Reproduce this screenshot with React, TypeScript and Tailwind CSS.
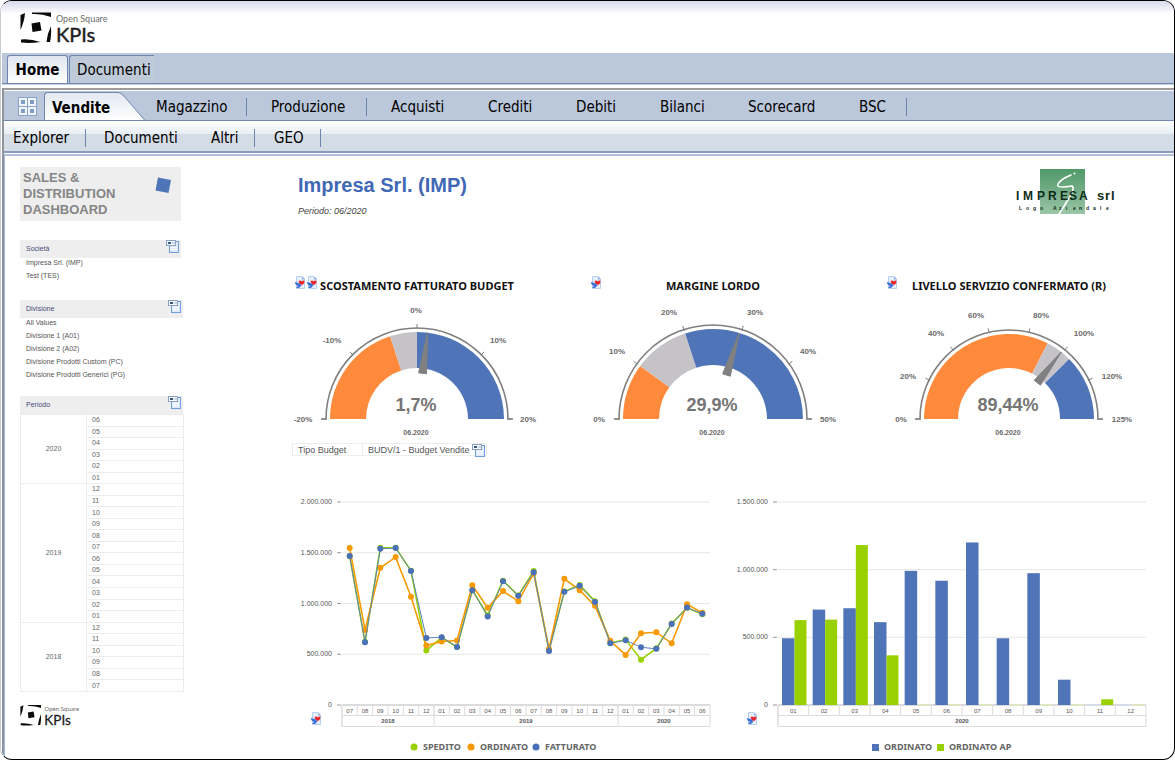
import React, { useState } from 'react';

interface NavItem {
  label: string;
  className: string;
}

interface GaugeData {
  title: string;
  value: string;
  radius: number;
  inner: number;
  needle: number;
  bands: { to: number; color: string }[];
  ticks: number[];
  labels: { text: string; x: number; y: number }[];
  icons: number;
}

interface FilterData {
  title: string;
  className: string;
  values: string[];
}

const ORANGE = '#ff8a3c';
const GREY = '#c5c3c7';
const BLUE = '#4f74b8';
const LIME = '#99d100';
const AMBER = '#f79a00';

const menu: NavItem[] = [
  { label: 'Magazzino', className: 'w-[91px] mr-6 border-r' },
  { label: 'Produzione', className: 'w-[96px] mr-6 border-r' },
  { label: 'Acquisti', className: 'w-[97px]' },
  { label: 'Crediti', className: 'w-[88px]' },
  { label: 'Debiti', className: 'w-[84px]' },
  { label: 'Bilanci', className: 'w-[88px]' },
  { label: 'Scorecard', className: 'w-[111px]' },
  { label: 'BSC', className: 'w-12 border-r' },
];

const subMenu: NavItem[] = [
  { label: 'Explorer', className: 'w-[73px] mr-[18px] border-r' },
  { label: 'Documenti', className: 'w-[107px]' },
  { label: 'Altri', className: 'w-11 mr-[19px] border-r' },
  { label: 'GEO', className: 'w-[47px] border-r' },
];

const filters: FilterData[] = [
  { title: 'Società', className: 'w-[161px] mt-[19px]', values: ['Impresa Srl. (IMP)', 'Test (TES)'] },
  {
    title: 'Divisione',
    className: 'w-[163px] mt-4',
    values: [
      'All Values',
      'Divisione 1 (A01)',
      'Divisione 2 (A02)',
      'Divisione Prodotti Custom (PC)',
      'Divisione Prodotti Generici (PG)',
    ],
  },
];

const periods = [
  { year: '2020', months: ['06', '05', '04', '03', '02', '01'] },
  { year: '2019', months: ['12', '11', '10', '09', '08', '07', '06', '05', '04', '03', '02', '01'] },
  { year: '2018', months: ['12', '11', '10', '09', '08', '07'] },
];

// Angles are in degrees, 0 on the left end of the dial and 180 on the right end
const gauges: GaugeData[] = [
  {
    title: 'SCOSTAMENTO FATTURATO BUDGET',
    value: '1,7%',
    radius: 87,
    inner: 51,
    needle: 97,
    bands: [{ to: 72, color: ORANGE }, { to: 90, color: GREY }, { to: 180, color: BLUE }],
    ticks: [0, 45, 90, 135, 180],
    labels: [
      { text: '-20%', x: 11, y: 119 },
      { text: '-10%', x: 40, y: 40 },
      { text: '0%', x: 124, y: 10 },
      { text: '10%', x: 206, y: 40 },
      { text: '20%', x: 236, y: 119 },
    ],
    icons: 2,
  },
  {
    title: 'MARGINE LORDO',
    value: '29,9%',
    radius: 90,
    inner: 54,
    needle: 107,
    bands: [{ to: 36, color: ORANGE }, { to: 72, color: GREY }, { to: 180, color: BLUE }],
    ticks: [0, 36, 72, 108, 144, 180],
    labels: [
      { text: '0%', x: 11, y: 119 },
      { text: '10%', x: 29, y: 51 },
      { text: '20%', x: 81, y: 12 },
      { text: '30%', x: 167, y: 12 },
      { text: '40%', x: 220, y: 51 },
      { text: '50%', x: 240, y: 119 },
    ],
    icons: 1,
  },
  {
    title: 'LIVELLO SERVIZIO CONFERMATO (R)',
    value: '89,44%',
    radius: 85,
    inner: 51,
    needle: 128,
    bands: [{ to: 117, color: ORANGE }, { to: 135, color: GREY }, { to: 180, color: BLUE }],
    ticks: [0, 26, 51, 77, 103, 129, 154, 180],
    labels: [
      { text: '0%', x: 17, y: 119 },
      { text: '20%', x: 24, y: 76 },
      { text: '40%', x: 52, y: 33 },
      { text: '60%', x: 92, y: 15 },
      { text: '80%', x: 157, y: 15 },
      { text: '100%', x: 200, y: 33 },
      { text: '120%', x: 228, y: 76 },
      { text: '125%', x: 238, y: 119 },
    ],
    icons: 1,
  },
];

// Values in thousands
const ordinato = [1546, 740, 1352, 1457, 1066, 585, 625, 635, 1181, 957, 1122, 1023, 1296, 552, 1243, 1131, 977, 632, 493, 707, 717, 608, 993, 908];
const fatturato = [1467, 618, 1540, 1546, 1319, 661, 668, 572, 1131, 872, 1220, 1076, 1309, 533, 1115, 1174, 1016, 608, 638, 569, 553, 799, 960, 898];
const spedito = [1467, 622, 1550, 1550, 1322, 536, 664, 572, 1131, 885, 1224, 1080, 1320, 537, 1118, 1182, 1022, 610, 645, 447, 558, 802, 957, 895];
const lineMonths = ['07', '08', '09', '10', '11', '12', '01', '02', '03', '04', '05', '06', '07', '08', '09', '10', '11', '12', '01', '02', '03', '04', '05', '06'];

const barOrdinato = [493, 705, 715, 612, 991, 918, 1201, 493, 974, 187, 0, 0];
const barOrdinatoAp = [627, 631, 1182, 367, 0, 0, 0, 0, 0, 0, 42, 0];
const barMonths = ['01', '02', '03', '04', '05', '06', '07', '08', '09', '10', '11', '12'];

const polar = (cx: number, cy: number, r: number, deg: number) => {
  const a = (deg * Math.PI) / 180;
  return [cx - r * Math.cos(a), cy - r * Math.sin(a)];
};

const band = (cx: number, cy: number, r: number, inner: number, from: number, to: number) => {
  const [x1, y1] = polar(cx, cy, r, from);
  const [x2, y2] = polar(cx, cy, r, to);
  const [x3, y3] = polar(cx, cy, inner, to);
  const [x4, y4] = polar(cx, cy, inner, from);
  return `M${x1} ${y1}A${r} ${r} 0 0 1 ${x2} ${y2}L${x3} ${y3}A${inner} ${inner} 0 0 0 ${x4} ${y4}Z`;
};

const KpiLogo: React.FC<{ className: string }> = ({ className }) => (
  <svg className={className} viewBox="0 0 96 34" role="img" aria-label="Open Square KPIs">
    <g fill="#0b0b0b">
      <path d="M.5 4 5 2Q4.500 10 .5 19Z" />
      <path d="M12 1.500H31V6Q22 2.500 12 3Z" />
      <path d="M11.500 12.500 20 11 21.500 19.500 12.500 21Z" />
      <path d="M31 15Q27.500 22 26.500 31H30Q31.500 25 31 15Z" />
      <path d="M1 28.500Q10 27.500 20.500 31 10 32.500 1 31.500Z" />
    </g>
    <text x="36" y="11" fontSize="9" fill="#6b6b6b" fontFamily="Lato, sans-serif">Open Square</text>
    <text x="36" y="31" fontSize="20" fill="#1c1c1c" stroke="#1c1c1c" strokeWidth=".4" fontFamily="Lato, sans-serif">KPIs</text>
  </svg>
);

const ImpresaLogo = () => (
  <svg className="w-[102px] h-[52px] mr-[37px]" viewBox="0 0 102 52" role="img" aria-label="Impresa srl">
    <defs>
      <linearGradient id="impresa" x1="0" y1="0" x2="0" y2="1">
        <stop offset="0" stopColor="#4f9a68" />
        <stop offset="0.6" stopColor="#7db18d" />
        <stop offset="1" stopColor="#9ac7a6" />
      </linearGradient>
    </defs>
    <rect x="25" y="4" width="45" height="45" fill="url(#impresa)" />
    <path d="M56 10Q42 16 43 21 44 23 57 21 61 23 51 38 47 45 44 49" fill="none" stroke="#fff" strokeWidth="1.600" strokeLinecap="round" />
    <circle cx="59.500" cy="8.500" r="1" fill="#fff" />
    <g fill="#0d2b18" fontWeight="bold" fontFamily="'Liberation Sans Narrow', 'Liberation Sans', sans-serif">
      <text x="1 8 22 33 45 54 64" y="35" fontSize="12">IMPRESA</text>
      <text x="82 90 96" y="35" fontSize="13">srl</text>
      <text x="4 11 18 25 32 38 44 51 58 64 71 78 85 91" y="45" fontSize="5">Logo Aziendale</text>
    </g>
  </svg>
);

const ExportIcon = () => (
  <svg className="w-3 h-[13px] shrink-0" viewBox="0 0 12 13" aria-hidden="true">
    <path d="M2.500 .5H8L10.500 3V12.500H2.500Z" fill="#e6effb" stroke="#b9cfee" />
    <path d="M8 .5V3.500H11Z" fill="#8fb2e3" />
    <path d="M4.500 5Q7 4 7.500 5.500 9 4 10.500 5 10.500 8 7.500 9 5 8 4.500 5Z" fill="#e8252b" />
    <path d="M.5 6 5 7 7.500 9.500 5 12 2 12 4 10 2 9Z" fill="#3f74d6" />
  </svg>
);

const ListIcon = () => (
  <svg className="w-[13px] h-[13px] shrink-0" viewBox="0 0 13 13" aria-hidden="true">
    <rect x="3.500" y="1.500" width="9" height="11" fill="#dfeafa" stroke="#6f9fdd" />
    <path d="M5 9.500H11M5 7.500H11" stroke="#fff" />
    <rect x=".5" y=".5" width="9" height="5" fill="#f7faff" stroke="#8aa3c2" />
    <path d="M2 2H5V4H2Z" fill="#38587f" />
    <path d="M6 3H9" stroke="#9ab1cf" />
  </svg>
);

const Gauge: React.FC<{ gauge: GaugeData }> = ({ gauge }) => {
  const cx = 125;
  const cy = 119;
  const ring = gauge.radius + 4;
  const tip = polar(cx, cy, gauge.radius, gauge.needle);
  const base = polar(cx, cy, 46, gauge.needle);
  const a = ((gauge.needle + 90) * Math.PI) / 180;
  // The dial's x axis is mirrored, so the perpendicular is too
  const dx = -4 * Math.cos(a);
  const dy = -4 * Math.sin(a);

  return (
    <svg className="w-full h-auto mt-[5px] block" viewBox="0 0 270 140" role="img" aria-label={gauge.title}>
      <path
        d={`M${cx - ring - 5} ${cy}H${cx - ring}A${ring} ${ring} 0 0 1 ${cx + ring} ${cy}H${cx + ring + 5}`}
        fill="none"
        stroke="#808080"
        strokeWidth="1.600"
      />
      {gauge.ticks.map((t) => {
        const [x1, y1] = polar(cx, cy, ring - 1, t);
        const [x2, y2] = polar(cx, cy, ring + 4, t);
        return <line key={t} x1={x1} y1={y1} x2={x2} y2={y2} stroke="#808080" />;
      })}
      {gauge.bands.map((b, i) => (
        <path key={i} fill={b.color} d={band(cx, cy, gauge.radius, gauge.inner, i === 0 ? 0 : gauge.bands[i - 1].to, b.to)} />
      ))}
      <path d={`M${tip[0]} ${tip[1]}L${base[0] + dx} ${base[1] + dy}L${base[0] - dx} ${base[1] - dy}Z`} fill="#808080" stroke="#808080" />
      <g textAnchor="middle" fontFamily="'Liberation Sans', Arial, sans-serif" fill="#6a6a6a">
        {gauge.labels.map((l) => (
          <text key={l.text} x={l.x} y={l.y + 3} fontSize="8" fontWeight="bold">{l.text}</text>
        ))}
        <text x="124" y="111" fontSize="18" fontWeight="bold" fill="#757575">{gauge.value}</text>
        <text x="124" y="135" fontSize="7" fontWeight="bold">06.2020</text>
      </g>
    </svg>
  );
};

interface AxisProps {
  left: number;
  months: string[];
  years: { label: string; count: number }[];
  scale: string[];
}

// Grid lines plus the two-row month / year axis, shared by both charts
const Axis: React.FC<AxisProps> = ({ left, months, years, scale }) => {
  const width = 368;
  const step = width / months.length;
  let used = 0;

  return (
    <g fontFamily="'Liberation Sans', Arial, sans-serif" fontSize="7" fill="#555">
      {scale.map((label, i) => {
        const y = 12 + (203 * i) / (scale.length - 1);
        return (
          <g key={label}>
            <line x1={left} x2={left + width} y1={y} y2={y} stroke={i === scale.length - 1 ? '#b8b8b8' : '#e6e6e6'} />
            <line x1={left - 5} x2={left - 1} y1={y} y2={y} stroke="#999" />
            <text x={left - 10} y={y + 2} textAnchor="end">{label}</text>
          </g>
        );
      })}
      <path d={`M${left} 215V236.500H${left + width}V215M${left} 225.500H${left + width}`} fill="none" stroke="#dcdcdc" />
      {months.map((m, i) => (
        <g key={i}>
          {i > 0 && <line x1={left + step * i} x2={left + step * i} y1="215" y2="225" stroke="#dcdcdc" />}
          <text x={left + step * (i + 0.5)} y="223" textAnchor="middle" fontSize="6">{m}</text>
        </g>
      ))}
      {years.map((y) => {
        const x = left + step * used;
        used += y.count;
        return (
          <g key={y.label}>
            <line x1={x} x2={x} y1="215" y2="236" stroke="#dcdcdc" />
            <text x={x + (step * y.count) / 2} y="233" textAnchor="middle" fontSize="6" fontWeight="bold">{y.label}</text>
          </g>
        );
      })}
    </g>
  );
};

const LineChart = () => {
  const left = 50;
  const step = 368 / 24;
  const px = (i: number) => left + step * (i + 0.5);
  const py = (v: number) => 215 - (v / 2000) * 203;
  const series = [
    { name: 'SPEDITO', color: LIME, data: spedito, x: 122, line: LIME },
    { name: 'ORDINATO', color: AMBER, data: ordinato, x: 179, line: AMBER },
    { name: 'FATTURATO', color: '#4a70b9', data: fatturato, x: 244, line: '#5b83bb' },
  ];

  return (
    <svg className="w-full h-auto block" viewBox="0 0 428 265" role="img" aria-label="Spedito, ordinato e fatturato">
      <Axis
        left={left}
        months={lineMonths}
        years={[{ label: '2018', count: 6 }, { label: '2019', count: 12 }, { label: '2020', count: 6 }]}
        scale={['2.000.000', '1.500.000', '1.000.000', '500.000', '0']}
      />
      {series.map((s) => (
        <g key={s.name}>
          <polyline
            points={s.data.map((v, i) => `${px(i)},${py(v)}`).join(' ')}
            fill="none"
            stroke={s.line}
            strokeWidth={s.name === 'FATTURATO' ? 1 : 1.6}
          />
          {s.data.map((v, i) => (
            <circle key={i} cx={px(i)} cy={py(v)} r="3" fill={s.color} />
          ))}
        </g>
      ))}
      <g fontFamily="'Noto Sans', sans-serif" fontSize="9" fontWeight="bold" fill="#666">
        {series.map((s) => (
          <g key={s.name}>
            <circle cx={s.x} cy="257" r="3.500" fill={s.color} />
            <text x={s.x + 9} y="260">{s.name}</text>
          </g>
        ))}
      </g>
    </svg>
  );
};

const BarChart = () => {
  const left = 52;
  const step = 368 / 12;
  const h = (v: number) => (v / 1500) * 203;

  return (
    <svg className="w-full h-auto block" viewBox="0 0 428 265" role="img" aria-label="Ordinato e ordinato anno precedente">
      <Axis
        left={left}
        months={barMonths}
        years={[{ label: '2020', count: 12 }]}
        scale={['1.500.000', '1.000.000', '500.000', '0']}
      />
      {barMonths.map((m, i) => {
        const x = left + step * i + 4;
        return (
          <g key={m}>
            {barOrdinato[i] > 0 ? (
              <rect x={x} y={215 - h(barOrdinato[i])} width="12.500" height={h(barOrdinato[i])} fill={BLUE} />
            ) : (
              <line x1={x} x2={x + 12} y1="215" y2="215" stroke="#cfdcf5" />
            )}
            {barOrdinatoAp[i] > 0 ? (
              <rect x={x + 12.5} y={215 - h(barOrdinatoAp[i])} width="12" height={h(barOrdinatoAp[i])} fill={LIME} />
            ) : (
              <line x1={x + 13} x2={x + 25} y1="215" y2="215" stroke="#e0f2a8" />
            )}
          </g>
        );
      })}
      <g fontFamily="'Noto Sans', sans-serif" fontSize="9" fontWeight="bold" fill="#666">
        <rect x="146" y="254" width="7" height="7" fill={BLUE} />
        <text x="158" y="260">ORDINATO</text>
        <rect x="211" y="254" width="7" height="7" fill={LIME} />
        <text x="223" y="260">ORDINATO AP</text>
      </g>
    </svg>
  );
};

const FilterHeader: React.FC<{ title: string }> = ({ title }) => (
  <div className="flex items-start justify-between h-[18px] bg-[#eeeeee] pl-[6px] pr-[2px]">
    <h2 className="text-[7px] leading-[17px] text-[#4a4a7c]">{title}</h2>
    <button type="button" aria-label={`Seleziona ${title}`} className="cursor-pointer">
      <ListIcon />
    </button>
  </div>
);

const Sidebar = () => (
  <aside className="w-[164px] shrink-0 pt-[11px]">
    <div className="flex justify-between w-[161px] h-[54px] bg-[#eeeeee] pl-[3px] pt-[3px] pr-2">
      <h1 className="text-[13px] leading-4 font-bold text-[#858585]">
        SALES &amp;
        <br />
        DISTRIBUTION
        <br />
        DASHBOARD
      </h1>
      <svg className="w-[18px] h-[18px] mt-[6px]" viewBox="0 0 18 18" aria-hidden="true">
        <path d="M3 1.500 16 4 13.500 17 .5 14.500Z" fill={BLUE} />
      </svg>
    </div>
    {filters.map((f) => (
      <section key={f.title} className={f.className}>
        <FilterHeader title={f.title} />
        <ul className="pl-[6px]">
          {f.values.map((v) => (
            <li key={v} className="h-[13px] text-[7px] leading-[10px] text-[#555] whitespace-nowrap">{v}</li>
          ))}
        </ul>
      </section>
    ))}
    <div className="mt-[13px] w-[163px]">
      <FilterHeader title="Periodo" />
    </div>
    <table className="w-full h-[278px] border-collapse text-[7px] leading-[8px] text-[#666]">
      <tbody>
        {periods.map((p) =>
          p.months.map((m, i) => (
            <tr key={p.year + m}>
              {i === 0 && (
                <th rowSpan={p.months.length} className="w-[66px] p-0 border border-[#ececec] font-normal">{p.year}</th>
              )}
              <td className="p-0 pl-[5px] border border-[#ececec]">{m}</td>
            </tr>
          )),
        )}
      </tbody>
    </table>
    <KpiLogo className="w-[65px] h-[23px] mt-3" />
  </aside>
);

const NavLink: React.FC<{ item: NavItem }> = ({ item }) => (
  <a href="#" className={`block h-[18px] leading-[19px] border-[#6d86b1] ${item.className}`}>{item.label}</a>
);

const App: React.FC = () => {
  const [page, setPage] = useState('Home');

  return (
    <div className="min-h-screen flex flex-col bg-white rounded-[12px] border border-black border-l-[#c9ccd2] pl-px overflow-hidden font-['Liberation_Sans',Arial,sans-serif]">
      <header className="h-[52px] pl-[18px] pt-[10px] bg-linear-to-b from-[#d9d9ec] from-0% to-white to-25%">
        <KpiLogo className="w-[96px] h-[34px]" />
      </header>

      <nav className="font-['DejaVu_Sans_Condensed','Noto_Sans',sans-serif] text-[15px] text-black">
        <div className="flex items-end h-[31px] pl-[5px] bg-[#bbc7da] border-b border-[#6e86b0]">
          <button
            type="button"
            onClick={() => setPage('Home')}
            className="w-[61px] h-[28px] pt-[2px] font-bold rounded-t-[3px] border border-b-0 border-[#6e86b0] bg-linear-to-b from-[#dfe6f0] to-white"
            aria-current={page === 'Home'}
          >
            Home
          </button>
          <button
            type="button"
            onClick={() => setPage('Documenti')}
            className="ml-px w-[85px] h-[28px] pt-[2px] pl-[7px] text-left rounded-tl-[3px] border-l border-t border-[#6e86b0] bg-[#bfcad9]"
            aria-current={page === 'Documenti'}
          >
            Documenti
          </button>
        </div>
        <div className="h-1 border-t border-[#c8d2e2]" />
        <div className="border-l-2 border-[#8f959b]">
          <div className="flex items-end h-[33px] pl-[14px] bg-[#bbc7da] border-t-2 border-t-[#9d9aa0] border-b border-b-[#6e86b0] shadow-[inset_0_1px_0_#fff]">
            <svg className="w-[19px] h-[19px] mb-1 mr-[7px]" viewBox="0 0 19 19" aria-label="Menu">
              <rect width="19" height="19" fill="#88a3cb" />
              <path d="M1 1H9V9H1ZM10 1H18V9H10ZM1 10H9V18H1ZM10 10H18V18H10Z" fill="#f2f6fb" />
              <path d="M3 3H7V7H3ZM12 3H16V7H12ZM3 12H7V16H3ZM12 12H16V16H12Z" fill="#7f9cc7" />
            </svg>
            <a
              href="#"
              className="block w-[74px] h-[28px] pl-[7px] leading-[30px] font-bold rounded-tl-[4px] border-l border-t border-[#6e86b0] bg-linear-to-b from-[#e3e9f2] to-white"
            >
              Vendite
            </a>
            <svg className="w-[27px] h-[28px]" viewBox="0 0 27 28" aria-hidden="true">
              <defs>
                <linearGradient id="slope" x1="0" y1="0" x2="0" y2="1">
                  <stop offset="0" stopColor="#e3e9f2" />
                  <stop offset="1" stopColor="#fff" />
                </linearGradient>
              </defs>
              <path d="M0 .5Q3 .5 6 4L26.500 28H0Z" fill="url(#slope)" />
              <path d="M0 .5Q3 .5 6 4L26.500 28" fill="none" stroke="#6e86b0" />
            </svg>
            <div className="flex pl-[11px] pb-1">
              {menu.map((item) => (
                <NavLink key={item.label} item={item} />
              ))}
            </div>
          </div>
          <div className="flex items-center h-[32px] pt-1 pl-[9px] bg-[linear-gradient(#ffffff_0%,#e8eef4_42%,#d4dce5_44%,#d4dce5_100%)] border-b-2 border-b-[#8a9bbd]">
            {subMenu.map((item) => (
              <NavLink key={item.label} item={item} />
            ))}
          </div>
        </div>
      </nav>

      <div className="flex-1 flex border-l-2 border-[#8f959b]">
        <div className="flex-1 flex mt-px border-l border-l-[#a3b7da] border-t-2 border-t-[#b0c0da] pl-[15px] min-w-0">
          <Sidebar />
          <main className="flex-1 min-w-0 ml-[108px] pr-5 pt-[9px]">
            <div className="flex justify-between h-[52px]">
              <div className="pl-[6px] pt-2">
                <h2 className="text-[20px] leading-6 font-bold text-[#4168b5]">Impresa Srl. (IMP)</h2>
                <p className="mt-2 text-[9px] leading-3 italic text-[#444]">Periodo: 06/2020</p>
              </div>
              <ImpresaLogo />
            </div>

            <div className="grid grid-cols-3 gap-[26px] mt-[59px]">
              {gauges.map((g, i) => (
                <section key={g.title} className="min-w-0">
                  <div className="flex h-[19px]">
                    <div className="flex w-[26px] pl-[2px] shrink-0">
                      {Array.from({ length: g.icons }, (_, n) => (
                        <button key={n} type="button" aria-label="Apri dettaglio" className="h-[13px]">
                          <ExportIcon />
                        </button>
                      ))}
                    </div>
                    <h3 className="flex-1 mr-[46px] text-center text-[11px] leading-[19px] font-bold font-['Noto_Sans',sans-serif] text-[#111] whitespace-nowrap">
                      {g.title}
                    </h3>
                  </div>
                  <Gauge gauge={g} />
                  {i === 0 && (
                    <div className="flex w-[195px] h-[13px] mt-[3px] border border-[#ededed] text-[9px] leading-[12px] text-[#555] whitespace-nowrap">
                      <span className="w-[69px] pl-[5px]">Tipo Budget</span>
                      <span className="flex-1 pl-[5px] border-l border-[#ededed]">BUDV/1 - Budget Vendite</span>
                      <button type="button" aria-label="Seleziona Tipo Budget" className="mr-px">
                        <ListIcon />
                      </button>
                    </div>
                  )}
                </section>
              ))}
            </div>

            <div className="grid grid-cols-2 gap-[6px] mt-[34px]">
              <div className="relative">
                <LineChart />
                <button type="button" aria-label="Apri dettaglio" className="absolute left-[18px] bottom-[30px]">
                  <ExportIcon />
                </button>
              </div>
              <div className="relative">
                <BarChart />
                <button type="button" aria-label="Apri dettaglio" className="absolute left-5 bottom-[30px]">
                  <ExportIcon />
                </button>
              </div>
            </div>
          </main>
        </div>
      </div>
    </div>
  );
};

export default App;
